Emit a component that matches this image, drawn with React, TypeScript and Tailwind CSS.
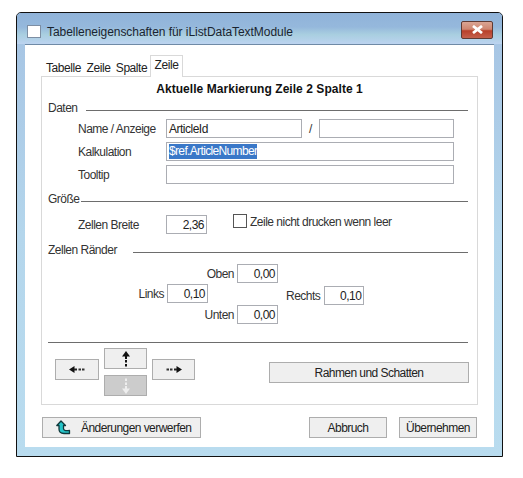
import React from 'react';

const font = { fontFamily: '"Liberation Sans", Arial, sans-serif' };

function Field({ className, value, right, selected }: { className: string; value?: string; right?: boolean; selected?: boolean }) {
  return (
    <div className={`h-[19px] shrink-0 border border-[#abadb3] bg-white flex items-center px-[2px] text-[12px] leading-none tracking-[-0.5px] text-[#222] ${right ? 'justify-end' : ''} ${className}`}>
      {selected ? <span className="bg-[#3a78c8] text-white h-[15px] leading-[15px] tracking-[-0.65px]">{value}</span> : value}
    </div>
  );
}

function Section({ label, lineClass }: { label: string; lineClass: string }) {
  return (
    <div className="flex items-center h-[14px] pl-[6px] pr-[9px]">
      <span className="text-[12px] leading-none tracking-[-0.5px] text-[#333]">{label}</span>
      <div className={`h-px bg-[#6d6d6d] flex-1 mt-[4px] ${lineClass}`} />
    </div>
  );
}

function Btn({ className, children, disabled }: { className: string; children?: React.ReactNode; disabled?: boolean }) {
  return (
    <button className={`h-[21px] shrink-0 border border-[#adadad] flex items-center justify-center text-[12px] leading-none tracking-[-0.55px] text-[#222] ${disabled ? 'bg-[#cccccc]' : 'bg-[#efefef]'} ${className}`}>
      {children}
    </button>
  );
}

function ArrowH({ flip }: { flip?: boolean }) {
  return (
    <svg width="16" height="7" viewBox="0 0 16 7" className={flip ? '-scale-x-100' : ''}>
      <path d="M0 3.5 L5.5 0 V7 Z" fill="#111" />
      <rect x="5" y="2.5" width="3" height="2" fill="#222" />
      <rect x="9.5" y="2.5" width="2.5" height="2" fill="#333" />
      <rect x="13" y="2.5" width="2.5" height="2" fill="#333" />
    </svg>
  );
}

function ArrowV({ down, color }: { down?: boolean; color: string }) {
  return (
    <svg width="8" height="16" viewBox="0 0 8 16" className={down ? '-scale-y-100' : ''}>
      <path d="M4 0 L8 5.5 H0 Z" fill={color} />
      <rect x="3" y="5" width="2" height="3" fill={color} />
      <rect x="3" y="9" width="2" height="2.5" fill={color} />
      <rect x="3" y="13" width="2" height="2.5" fill={color} />
    </svg>
  );
}

export default function App() {
  return (
    <div className="w-[523px] h-[478px] bg-white pt-[12px] pl-[16px]" style={font}>
      <div className="w-[487px] h-[445px] border border-[#111] rounded-t-[5px] bg-gradient-to-b from-[#a5c3e3] via-[#b4d6ec] to-[#b9dcef] flex flex-col">
        {/* title bar */}
        <div className="h-[31px] shrink-0 flex items-center pl-[10px] pr-[9px] pt-[6px] bg-[linear-gradient(to_bottom,#90b3d9_0%,#95b8dc_45%,#a9cfe0_70%,#bcd3f0_100%)] rounded-t-[4px]">
          <div className="w-[14px] h-[13px] bg-white border border-[#7d8ea3]" />
          <span className="ml-[6px] text-[12px] leading-none text-[#1a2430] tracking-[-0.05px]">Tabelleneigenschaften für iListDataTextModule</span>
          <div className="ml-auto w-[32px] h-[18px] mb-[4px] rounded-[2px] border border-[#5f3a33] bg-[linear-gradient(to_bottom,#d9a594_0%,#cf8670_45%,#b8402a_55%,#c4604c_100%)] flex items-center justify-center">
            <svg width="13" height="9" viewBox="0 0 13 9">
              <path d="M2 1 L11 8 M11 1 L2 8" stroke="#fff" strokeWidth="2.8" />
            </svg>
          </div>
        </div>

        {/* client area */}
        <div className="mx-[8px] w-[469px] h-[403px] bg-white border-t border-[#6f8aa6] pl-[16px] pt-[9px] flex flex-col">
          {/* tabs */}
          <div className="h-[22px] flex items-end pl-[2px] text-[12px] leading-none tracking-[-0.45px] text-[#222]">
            <div className="w-[41px] pb-[1px] h-[14px] text-center">Tabelle</div>
            <div className="w-[29px] pb-[1px] h-[14px] text-center">Zeile</div>
            <div className="w-[37px] pb-[1px] h-[14px] text-center">Spalte</div>
            <div className="w-[33px] h-[22px] border border-b-0 border-[#d9d9d9] bg-white text-center pt-[3px] relative top-px z-10">Zeile</div>
          </div>

          {/* tab page */}
          <div className="w-[437px] h-[329px] shrink-0 border border-[#d9d9d9] flex flex-col">
            <div className="text-center text-[12px] font-bold leading-none mt-[6px] h-[14px] text-[#111] tracking-[0.05px]">Aktuelle Markierung Zeile 2 Spalte 1</div>

            <div className="mt-[4px]"><Section label="Daten" lineClass="ml-[8px]" /></div>

            <div className="mt-[4px] flex flex-col gap-[4px] pl-[36px] text-[12px] leading-none tracking-[-0.5px] text-[#333]">
              <div className="flex items-center">
                <span className="w-[88px]">Name / Anzeige</span>
                <Field className="w-[136px]" value="ArticleId" />
                <span className="w-[17px] text-center">/</span>
                <Field className="w-[135px]" />
              </div>
              <div className="flex items-center">
                <span className="w-[88px]">Kalkulation</span>
                <Field className="w-[288px]" value="$ref.ArticleNumber" selected />
              </div>
              <div className="flex items-center">
                <span className="w-[88px]">Tooltip</span>
                <Field className="w-[288px]" />
              </div>
            </div>

            <div className="mt-[8px]"><Section label="Größe" lineClass="ml-[1px]" /></div>

            <div className="mt-[9px] flex items-start pl-[36px] text-[12px] leading-none tracking-[-0.5px] text-[#333]">
              <span className="w-[88px] mt-[4px]">Zellen Breite</span>
              <Field className="w-[41px]" value="2,36" right />
              <div className="ml-[26px] w-[14px] h-[14px] -mt-px border border-[#555] bg-white" />
              <span className="ml-[3px] mt-px">Zeile nicht drucken wenn leer</span>
            </div>

            <div className="mt-[9px]"><Section label="Zellen Ränder" lineClass="ml-[16px]" /></div>

            {/* margins */}
            <div className="mt-[7px] flex items-start text-[12px] leading-none tracking-[-0.5px] text-[#333]">
              <div className="mt-[20px] w-[166px] flex items-center justify-end gap-[3px]">
                <span>Links</span>
                <Field className="w-[41px]" value="0,10" right />
              </div>
              <div className="flex flex-col gap-[22px] items-end w-[70px]">
                <div className="flex items-center gap-[3px]">
                  <span>Oben</span>
                  <Field className="w-[41px]" value="0,00" right />
                </div>
                <div className="flex items-center gap-[3px]">
                  <span>Unten</span>
                  <Field className="w-[41px]" value="0,00" right />
                </div>
              </div>
              <div className="mt-[22px] ml-[8px] flex items-center gap-[4px]">
                <span>Rechts</span>
                <Field className="w-[40px]" value="0,10" right />
              </div>
            </div>

            <div className="mt-[18px] ml-[6px] mr-[9px] h-px bg-[#6d6d6d]" />

            {/* move buttons */}
            <div className="mt-[5px] flex items-start pl-[13px]">
              <Btn className="w-[44px] mt-[11px]"><ArrowH /></Btn>
              <div className="ml-[5px] flex flex-col gap-[6px]">
                <Btn className="w-[43px]"><ArrowV color="#111" /></Btn>
                <Btn className="w-[43px]" disabled><ArrowV down color="#eeeeee" /></Btn>
              </div>
              <Btn className="w-[43px] ml-[5px] mt-[11px]"><ArrowH flip /></Btn>
              <Btn className="w-[200px] ml-[74px] mt-[14px]">Rahmen und Schatten</Btn>
            </div>
          </div>

          {/* footer */}
          <div className="mt-[12px] flex items-center pl-px">
            <Btn className="w-[159px] justify-start pl-[13px]">
              <svg width="15" height="15" viewBox="0 0 15 15">
                <path d="M5 1 L9.5 5.5 H7.5 V8.5 C7.5 10.5 9 11 13.5 10.5 V13.5 H8 C4.5 13.5 3 11.5 3 9 V5.5 H0.8 Z" fill="#25c4c8" stroke="#10393c" strokeWidth="1.3" strokeLinejoin="round" />
              </svg>
              <span className="ml-[10px]">Änderungen verwerfen</span>
            </Btn>
            <Btn className="w-[78px] ml-[108px]">Abbruch</Btn>
            <Btn className="w-[78px] ml-[12px]">Übernehmen</Btn>
          </div>
        </div>
      </div>
    </div>
  );
}
